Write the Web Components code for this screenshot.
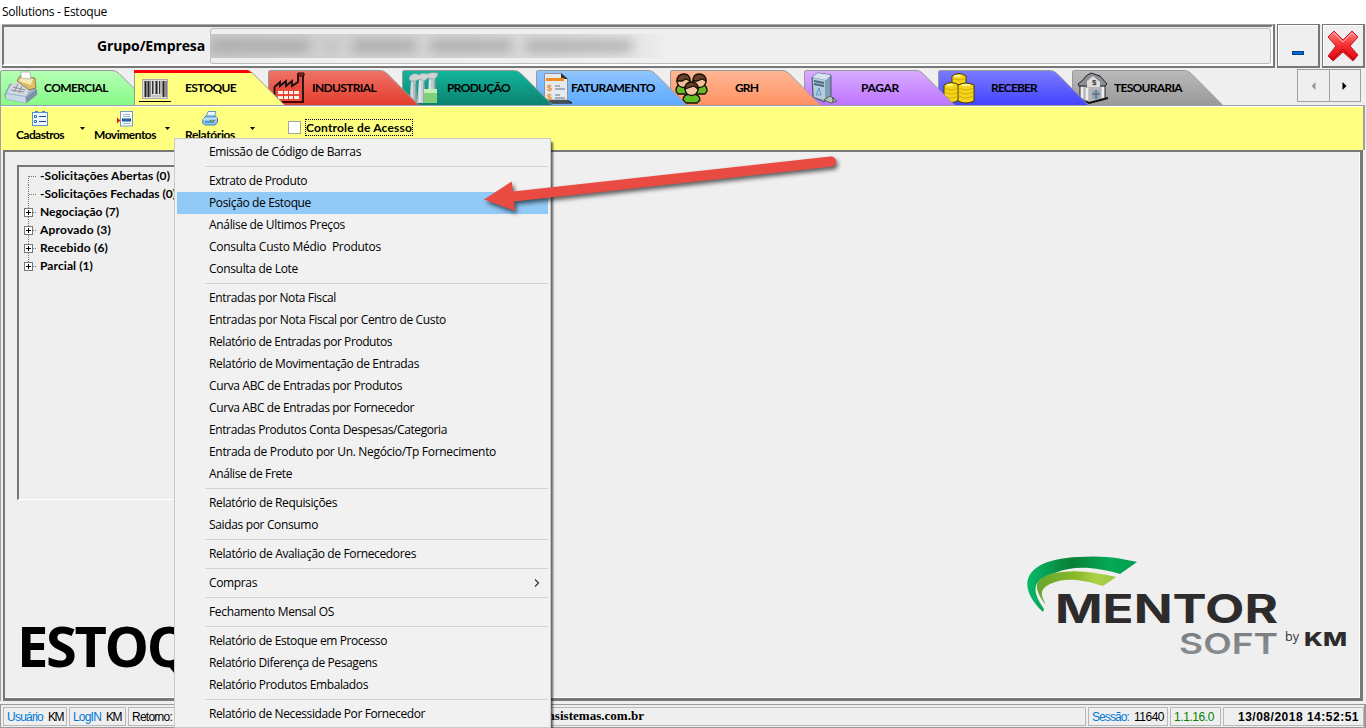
<!DOCTYPE html>
<html lang="pt-BR">
<head>
<meta charset="utf-8">
<title>Sollutions - Estoque</title>
<style>
html,body{margin:0;height:100%;overflow:hidden;background:#efefef}
</style>
</head>
<body>
<erp-window></erp-window>
<script>
const define=(name,markup,init)=>{
  const t=document.createElement('template');t.innerHTML=markup;
  customElements.define(name,class extends HTMLElement{
    connectedCallback(){
      if(this.shadowRoot)return;
      this.attachShadow({mode:'open'}).appendChild(document.importNode(t.content,true));
      if(init)init(this,this.shadowRoot);
    }
  });
};

/* A single line of text whose tracking is tuned to a given width. */
define('fit-text',`<style>:host{display:block;white-space:pre;flex:none}span{display:inline-block}</style><span><slot></slot></span>`,(h,r)=>{
  const w=+h.getAttribute('w'),s=r.querySelector('span');
  if(!w)return;
  const n=[...h.textContent].length;
  s.style.letterSpacing=((w-s.getBoundingClientRect().width)/n)+'px';
  h.style.width=w+'px';
});

const icons={
register:`<path d="M0 22 5 12 30 16 32 22 21 31 1 27z" fill="#9fb4ca" stroke="#6f8296" stroke-width=".6"/><path d="M1 22 20 25 21 31 1 27z" fill="#c9d8e6"/><path d="M21 25 32 17 32 23 21 31z" fill="#7d90a8"/><path d="M6 13 13 9 27 14 21 24 2 21z" fill="#d3d9de"/><path d="M12 9 15 4 30 6 31 16 24 18z" fill="#e0bd68" stroke="#75613a" stroke-width=".7"/><path d="M14 9 17 5 28 7 26 13z" fill="#f7e8b8"/><path d="M16 6 16 0 25 0 26 7z" fill="#fff" stroke="#999" stroke-width=".6"/><path d="M8 15 20 18M6 18 19 20M13 12 9 20M17 14 14 21" stroke="#7c8791" stroke-width=".9"/>`,
barcode:`<rect x="3.500" y="7.500" width="25" height="19" fill="#dcdcdc" stroke="#aaa"/><path d="M6.500 9V25M9.500 9V25M17.500 9V22M24.500 9V25" stroke="#222" stroke-width="2"/><path d="M13.500 9V22M20.500 9V22M27 9V25" stroke="#333"/><path d="M14.500 9V22M22 9V22M11.500 9V25" stroke="#888"/><path d="M13 24h10" stroke="#888" stroke-dasharray="1.500 1"/><path d="M0 29.500H32" stroke="#000"/>`,
factory:`<path d="M1.500 30V15L7 10V14L13 9V14L19 9V14L25 10V2.500H30V30z" fill="#e94a3c" stroke="#111" stroke-width="1.800"/><path d="M25 1H31V4H25z" fill="#b41e19" stroke="#111"/><path d="M5 19H26V22H5zM5 24H26V27H5z" fill="#fff0ea"/><path d="M10.500 18V28M15.500 18V28M20.500 18V28" stroke="#e33a2c"/><path d="M1 30H31" stroke="#400" stroke-width="2"/>`,
plant:`<path d="M4 9H9L10 31H2z" fill="#aebdc4"/><path d="M12 7H17L19 31H10z" fill="#c6d1d6"/><path d="M22 6H28L29 31H20z" fill="#b9c9cb"/><path d="M5 10V30M13 9V30M23 8V20" stroke="#f4f7f8"/><path d="M17 10V31M9 11V31M28 8V18" stroke="#71878d"/><path d="M4 9Q1 8 3 4 7 0 12 3 15 0 20 2 24 0 31 1 31 5 27 7L21 6 17 9 13 7 8 9z" fill="#d0d3d4" stroke="#9aa4a4" stroke-width=".7"/><rect x="17" y="17" width="13" height="14" fill="#82cf7b"/><path d="M17 17H30V21H17z" fill="#c5eeb7"/>`,
invoice:`<path d="M3.500 1.500H20L26.500 7V28H3.500z" fill="#e5e9ed" stroke="#8b9197"/><path d="M20 1 27 7H20z" fill="#333"/><path d="M5 6H23V9H5z" fill="#ef8d24"/><path d="M14 14H19M14 17H24M14 23H19M14 26H24" stroke="#8c9cac" stroke-width="1.500"/><text x="6" y="19" font-size="9" font-family="Liberation Sans" font-weight="bold" fill="#ee8b18">$</text><text x="6" y="28" font-size="9" font-family="Liberation Sans" font-weight="bold" fill="#ee8b18">$</text><path d="M8 29H28L31 31H9z" fill="#888" stroke="#111"/>`,
people:`<g stroke="#171006" stroke-width="1.300"><path d="M1 19Q1 12 8 12T16 19L14 22H3zM17 19Q18 12 25 12T32 19L30 22H19z" fill="#65b927"/><circle cx="8.500" cy="9" r="6.500" fill="#f3c09a"/><circle cx="24.500" cy="9" r="6.500" fill="#f3c09a"/><path d="M2 9Q2 2 9 2 15 2 15 9L11 7 7 9zM18 9Q18 2 24 2 31 2 31 9L27 7 22 9z" fill="#68412b"/><path d="M8 28Q8 22 16.500 22 25 22 25 28L22 31H11z" fill="#5dbd23"/><circle cx="16.500" cy="17" r="6.500" fill="#f5c6a2"/><path d="M10 17Q10 10 16.500 10 23 10 23 17L19 14 13 16z" fill="#67402b"/></g>`,
bin:`<path d="M3 5 9 1 22 3 22 24 15 30 4 25z" fill="#7f9fb8" stroke="#29323a" stroke-width=".7"/><path d="M3 5 9 1 22 3 17 8z" fill="#d4e3ed"/><path d="M4 6 16 8 16 28 5 25z" fill="#b9ccda"/><path d="M5 9 15 11M5 12 15 14" stroke="#496984" stroke-width="2"/><path d="M7 23 10 16 12 23z" fill="none" stroke="#4f9bd0"/><path d="M15 28 21 24 28 29 22 31z" fill="#b4c7b7" stroke="#51634f"/><path d="M24 25V30" stroke="#354937"/>`,
coins:`<g fill="#f6d41a" stroke="#463a00"><path d="M9 4V17H23V4Q16-1 9 4"/><path d="M1 13V28Q8 33 16 28V13Q8 8 1 13"/><path d="M15 13V29Q23 33 31 29V13Q23 9 15 13"/></g><g fill="none" stroke="#d0aa08"><path d="M9 6Q16 10 23 6M2 16Q8 20 15 16M2 20Q8 24 15 20M2 24Q8 28 15 24M16 16Q23 20 30 16M16 20Q23 24 30 20M16 24Q23 28 30 24"/></g><path d="M11 4H18M4 13H10M19 13H27" stroke="#fff59b" stroke-width="2"/>`,
bank:`<path d="M3 13H28V27L13 31 3 27z" fill="#b7b8bb" stroke="#222"/><path d="M1 12 6 8 9 4 14 1 23 4 30 12 28 14H2z" fill="#8b8f94" stroke="#222"/><path d="M10 9 16 4 23 10V15H10z" fill="#ddd"/><text x="15" y="13" font-size="8" font-family="Liberation Sans" font-weight="bold" fill="#333">$</text><path d="M5 15V26M10 16V28M26 15V26" stroke="#eee" stroke-width="2.500"/><path d="M15 18H23V27H15z" fill="#8da9bb"/><path d="M19 18V27M15 22H23" stroke="#556"/><path d="M1 27 12 31 31 26" fill="none" stroke="#111" stroke-width="2"/>`,
form:`<rect x=".5" y="1.500" width="15" height="13" fill="#f4faff" stroke="#5a93c8"/><path d="M3 .500H6M10 .500H13" stroke="#4779aa"/><path d="M2.500 4.500H4.500V6.500H2.500zM2.500 9.500H4.500V11.500H2.500z" fill="#fff" stroke="#2773bd"/><path d="M7 5.500H14M7 10.500H14" stroke="#174d8d"/>`,
move:`<rect x="3.500" y=".500" width="12" height="14.500" fill="#f7fbff" stroke="#719dca"/><path d="M6 3.500H13M6 5.500H13M6 12.500H13" stroke="#9eb8d2"/><rect x="5.500" y="8" width="8" height="2" fill="#2a82cf" stroke="#164b86"/><path d="M0 6.500 3.500 9.500 0 12.500z" fill="#e51c1c"/>`,
printer:`<path d="M4 6 6 .500H14L12 7z" fill="#edf7ff" stroke="#5d9bd0"/><path d="M1 8 4 5H13L15.500 7V11L13 14H3L.500 12z" fill="#8fc6ef" stroke="#3d86c4"/><path d="M1 8H12L15 7" fill="none" stroke="#e9f7ff"/><path d="M3 11H12" stroke="#236199"/><path d="M8 9.500H10" stroke="#19b719" stroke-width="1.500"/><path d="M11 9.500H12.500" stroke="#e22" stroke-width="1.500"/>`
};

define('erp-icon',`<style>:host{display:block;flex:none}svg{display:block;overflow:visible}</style><svg></svg>`,(h,r)=>{
  const n=+h.getAttribute('size')||32,s=r.querySelector('svg');
  s.setAttribute('width',n);s.setAttribute('height',n);s.setAttribute('viewBox',`0 0 ${n} ${n}`);
  s.innerHTML=icons[h.getAttribute('name')];
});

define('erp-tab',`<style>
:host{display:block;width:134px;height:36px;flex:none}
.shape{display:block;width:153px;height:36px}
.body{display:grid;width:153px;height:36px}
.body>*{grid-area:1/1}
.icon{padding:3px 0 0 5px}
.label{display:flex;align-items:flex-start;padding-top:11px}
</style><div class="body"><svg class="shape" width="153" height="36"></svg><div class="icon"></div><div class="label"></div></div>`,(h,r)=>{
  const a=n=>h.getAttribute(n),sel=h.hasAttribute('selected');
  r.querySelector('svg').innerHTML=`<defs><linearGradient id="g" x2="0" y2="1"><stop stop-color="${a('top')}"/><stop offset="1" stop-color="${a('bottom')}"/></linearGradient></defs>
  <path d="M.500 36V3Q.500 1.500 2.500 1.500H112Q116 1.500 119 4.500L150.500 36z" fill="url(#g)"/><path d="M.500 36V3Q.500 1.500 2.500 1.500H112Q116 1.500 119 4.500L150.500 36" fill="none" stroke="#999"/>${sel?'<path d="M0 1H114L118 4H0z" fill="#f00"/>':''}`;
  r.querySelector('.icon').innerHTML=`<erp-icon name="${a('icon')}"></erp-icon>`;
  const f=r.querySelector('.label');f.style.paddingLeft=(+a('indent')+1)+'px';
  f.innerHTML=`<fit-text w="${a('w')}">${a('label')}</fit-text>`;
});

define('erp-tabs',`<style>
:host{display:flex;height:36px;padding:0 5px 0 0;justify-content:space-between;font:bold 12px/16px Lato,sans-serif;color:#000}
.tabs{display:flex}
erp-tab{position:relative}
.scroll{display:flex;height:31px;width:62px;border:1px solid #a0a0a0}
.scroll div{flex:1;display:flex;align-items:center;justify-content:center}
.scroll div+div{border-left:1px solid #a0a0a0}
</style><div class="tabs">
<erp-tab style="z-index:9" label="COMERCIAL" indent="43" w="64" icon="register" top="#b5ffb5" bottom="#87fa87"></erp-tab>
<erp-tab selected style="z-index:12" label="ESTOQUE" indent="50" w="51" icon="barcode" top="#ffff82" bottom="#ffff80"></erp-tab>
<erp-tab style="z-index:7" label="INDUSTRIAL" indent="43" w="64" icon="factory" top="#ee7468" bottom="#e53c2d"></erp-tab>
<erp-tab style="z-index:6" label="PRODUÇÃO" indent="44" w="63" icon="plant" top="#12b69d" bottom="#0b8270"></erp-tab>
<erp-tab style="z-index:5" label="FATURAMENTO" indent="34" w="84" icon="invoice" top="#91c5ff" bottom="#5eaaff"></erp-tab>
<erp-tab style="z-index:4" label="GRH" indent="64" w="23" icon="people" top="#ffb795" bottom="#ff9264"></erp-tab>
<erp-tab style="z-index:3" label="PAGAR" indent="56" w="38" icon="bin" top="#d9adff" bottom="#bd73ff"></erp-tab>
<erp-tab style="z-index:2" label="RECEBER" indent="52" w="46" icon="coins" top="#7b7bff" bottom="#4444ff"></erp-tab>
<erp-tab style="z-index:1" label="TESOURARIA" indent="41" w="68" icon="bank" top="#bababa" bottom="#999"></erp-tab>
</div><div class="scroll"><div><svg width="5" height="8"><path d="M4.500 0V8L.500 4z" fill="#999"/></svg></div><div><svg width="5" height="8"><path d="M.500 0V8L4.500 4z" fill="#000"/></svg></div></div>`);

define('erp-header',`<style>
:host{display:flex;height:45px;font:bold 14px/18px "Open Sans",sans-serif;gap:2px;padding-left:2px;box-sizing:border-box}
.panel{box-sizing:border-box;width:1273px;height:44px;border-top:1px solid #aaa;border-right:2px solid #777;border-bottom:2px solid #777;display:flex}
.in{box-sizing:border-box;flex:1;border-top:2px solid #777;border-left:2px solid #777;border-right:2px solid #fff;border-bottom:2px solid #fff;display:flex;align-items:center}
.label{width:206px;box-sizing:border-box;padding-left:93px}
.field{height:36px;width:1061px;box-sizing:border-box;border:1px solid #bbb;border-radius:3px;display:flex;align-items:center}
.redact{width:457px;height:24px;margin-left:-1px;overflow:hidden;display:flex;align-items:center;gap:14px;background:linear-gradient(90deg,#ccc,#dadada 70%,#e7e7e7 95%,#efefef)}
.redact i{height:12px;background:#999;filter:blur(6px);opacity:.7}
button{box-sizing:border-box;width:43px;height:44px;padding:0;border:solid #777;border-width:1px 2px 2px 1px;background:#efefef;display:flex;align-items:center;justify-content:center;box-shadow:inset 1px 1px #fff;flex:none}
</style><div class="panel"><div class="in"><div class="label"><fit-text w="108">Grupo/Empresa</fit-text></div><div class="field"><div class="redact"><i style="width:100px"></i><i style="width:14px;opacity:.3"></i><i style="width:64px"></i><i style="width:82px"></i><i style="width:106px"></i></div></div></div></div>
<button aria-label="Minimizar"><svg width="12" height="30"><rect x=".5" y="20.500" width="11" height="3" fill="#0868cc" stroke="#003e96"/></svg></button>
<button aria-label="Fechar"><svg width="32" height="32" viewBox="0 0 32 32"><defs><linearGradient id="r" x2="0" y2="1"><stop stop-color="#ff8585"/><stop offset=".5" stop-color="#f42b2b"/><stop offset="1" stop-color="#df0a16"/></linearGradient></defs><path d="M7 1 16 10 25 1 31 7 23 16 31 25 26 31 16 22 6 31 1 26 9 16 1 7z" fill="url(#r)" stroke="#c71926" stroke-linejoin="round"/><path d="M7 3 16 12 25 3 28 6" fill="none" stroke="#ffb5b5"/><path d="M3 26 6 29 16 19 26 29 29 26" fill="none" stroke="#b60010"/></svg></button>`);

define('erp-tool',`<style>
:host{display:flex;width:85px;height:43px;flex:none}
.main{width:78px;display:flex;flex-direction:column;align-items:center;padding-top:3px}
fit-text{margin-top:1px}
svg{margin:19px 0 0 1px;flex:none}
</style><div class="main"></div><svg width="5" height="3"><path d="M0 0H5L2.500 3z"/></svg>`,(h,r)=>{
  r.querySelector('.main').innerHTML=`<erp-icon size="16" name="${h.getAttribute('icon')}"></erp-icon><fit-text w="${h.getAttribute('w')}">${h.textContent}</fit-text>`;
});

define('erp-toolbar',`<style>
:host{display:flex;background:#ffff80;border:solid #a0a0a0;border-width:1px 2px 0 1px;box-shadow:inset 0 1px #fff;margin-right:1px;font:bold 12px/14px Lato,sans-serif;box-sizing:border-box;height:45px;padding-top:2px}
.check{display:flex;align-items:center;height:17px;margin:11px 0 0 32px;gap:4px}
.box{width:11px;height:11px;border:1px solid #a6a6a6;background:#fff}
.lab{border:1px dotted #000;height:14px;width:106px;padding-top:1px}
</style><erp-tool icon="form" w="48">Cadastros</erp-tool><erp-tool icon="move" w="62">Movimentos</erp-tool><erp-tool icon="printer" w="50">Relatórios</erp-tool><div class="check"><div class="box"></div><div class="lab"><fit-text w="106">Controle de Acesso</fit-text></div></div>`);

define('tree-item',`<style>
:host{display:flex;height:18px;align-items:center}
svg{width:21px;height:18px;flex:none}
</style><svg></svg><slot></slot>`,(h,r)=>{
  const e=h.hasAttribute('expandable'),f=h.hasAttribute('first'),l=h.hasAttribute('last');
  r.querySelector('svg').innerHTML=`<path d="M9.500 ${f?9:0}V${l?9:18}M10 9.500H18" stroke="#777" stroke-dasharray="1 1"/>`+(e?'<rect x="5.500" y="5.500" width="8" height="8" fill="#fff" stroke="#777"/><path d="M7 9.500H12M9.500 7V12" stroke="#000"/>':'');
});

define('erp-tree',`<style>
:host{display:block;box-sizing:border-box;width:340px;height:335px;border:solid #777;border-width:2px 0 0 2px;border-bottom:1px solid #fff;font:bold 12px/18px Lato,sans-serif}
</style><tree-item first><fit-text w="130">-Solicitações Abertas (0)</fit-text></tree-item><tree-item><fit-text w="136">-Solicitações Fechadas (0)</fit-text></tree-item><tree-item expandable><fit-text w="79">Negociação (7)</fit-text></tree-item><tree-item expandable><fit-text w="71">Aprovado (3)</fit-text></tree-item><tree-item expandable><fit-text w="68">Recebido (6)</fit-text></tree-item><tree-item expandable last><fit-text w="53">Parcial (1)</fit-text></tree-item>`);

define('mentor-logo',`<style>:host{display:block;width:330px;height:110px}svg{display:block}</style>
<svg width="330" height="110" viewBox="0 0 330 110"><defs><linearGradient id="a" x2="1"><stop stop-color="#08b968"/><stop offset=".4" stop-color="#087f36"/><stop offset=".75" stop-color="#05a957"/><stop offset="1" stop-color="#009d50"/></linearGradient><linearGradient id="b" x2="1"><stop stop-color="#64a62f"/><stop offset=".5" stop-color="#8ab829"/><stop offset=".75" stop-color="#abd247"/><stop offset="1" stop-color="#9bc83a"/></linearGradient><linearGradient id="c" x2="0" y2="1"><stop stop-color="#76797c"/><stop offset="1" stop-color="#909396"/></linearGradient></defs>
<path d="M24 62C-4 36 4 9 60 7 86 5 105 9 118 12L101 24C76 17 56 15 36 23 10 30 14 43 25 59z" fill="url(#a)"/><path d="M26 54C13 36 14 26 43 22 62 20 79 23 97 27L84 36C63 29 45 27 31 34 19 40 23 46 26 53z" fill="url(#b)"/>
<g font-family="Inter,sans-serif" font-weight="700"><text x="36" y="73" font-size="39" textLength="223" lengthAdjust="spacingAndGlyphs" fill="#2e2b2c">MENTOR</text><text x="160" y="104" font-size="29" font-weight="600" textLength="99" lengthAdjust="spacingAndGlyphs" fill="url(#c)">SOFT</text><text x="285" y="96" font-size="19" font-weight="800" textLength="43" lengthAdjust="spacingAndGlyphs" fill="#2e2b2c">KM</text></g><text x="266" y="91" font-family="Open Sans,sans-serif" font-size="12" textLength="14" lengthAdjust="spacingAndGlyphs" fill="#333">by</text></svg>`);

define('erp-workspace',`<style>
:host{display:block;height:551px;padding:0 3px 0 2px;box-sizing:border-box;background:#efefef;border-left:1px solid #a0a0a0}
.pane{box-sizing:border-box;height:551px;border:solid #777;border-width:2px 3px 3px 2px;padding:13px 12px 0 12px;display:flex;flex-direction:column;justify-content:space-between;box-shadow:inset -1px -1px #fff}
.bottom{display:flex;justify-content:space-between;align-items:flex-end;height:170px}
h1{margin:0;font:bold 56px/64px "Open Sans",sans-serif;padding:0 0 21px 0}
mentor-logo{margin-bottom:38px;margin-right:-1px}
</style><div class="pane"><erp-tree></erp-tree><div class="bottom"><h1><fit-text w="241">ESTOQUE</fit-text></h1><mentor-logo></mentor-logo></div></div>`);

define('status-panel',`<style>
:host{display:flex;box-sizing:border-box;height:19px;border:1px solid #b8b8b8;align-items:center;gap:5px;padding:0 3px;flex:none}
</style><slot></slot>`);

define('erp-status',`<style>
:host{display:flex;box-sizing:border-box;height:24px;border:1px solid #999;border-width:1px 2px 1px 1px;padding:2px 0 0 2px;gap:2px;font:12px/14px "Liberation Sans",sans-serif;color:#000}
b{font:inherit;color:#0078d7}.g{color:#008000}
.site{font:bold 13px/14px "Liberation Serif",serif;margin:-2px 0 0 367px}
.time{font-weight:bold;justify-content:flex-end;padding-right:4px}
</style>
<status-panel style="width:64px"><b><fit-text w="36">Usuário</fit-text></b><fit-text w="15">KM</fit-text></status-panel>
<status-panel style="width:57px"><b><fit-text w="28">LogIN</fit-text></b><fit-text w="15">KM</fit-text></status-panel>
<status-panel style="width:958px"><fit-text w="40">Retorno:</fit-text><div class="site"><fit-text w="100">msistemas.com.br</fit-text></div></status-panel>
<status-panel style="width:80px"><b><fit-text w="37">Sessão:</fit-text></b><fit-text w="30">11640</fit-text></status-panel>
<status-panel style="width:51px"><fit-text class="g" w="40">1.1.16.0</fit-text></status-panel>
<status-panel class="time" style="width:141px"><fit-text w="121">13/08/2018 14:52:51</fit-text></status-panel>`);

define('menu-item',`<style>
:host{display:flex;height:22px;align-items:center;justify-content:space-between;margin:0 2px;padding:0 8px 0 32px}
:host([active]){background:#91c9f7}
svg{display:none}:host([sub]) svg{display:block}
</style><slot></slot><svg width="6" height="8"><path d="M1 .500 4.500 4 1 7.500" fill="none" stroke="#333" stroke-width="1.200"/></svg>`);
define('menu-line',`<style>:host{display:block;height:1px;margin:3px 2px 3px 30px;background:#d3d3d3}</style>`);

define('erp-menu',`<style>
:host{display:block;box-sizing:border-box;width:377px;height:590px;background:#f1f1f1;border:1px solid #c8c8c8;padding-top:2px;font:12px/16px "Open Sans","Noto Sans",sans-serif;color:#000;box-shadow:3px 3px 2px -1px #0009}
</style>`,(h,r)=>{
  const groups=[
  [['Emissão de Código de Barras',152]],
  [['Extrato de Produto',98],['Posição de Estoque',102,'active'],['Análise de Ultimos Preços',136],['Consulta Custo Médio  Produtos',172],['Consulta de Lote',89]],
  [['Entradas por Nota Fiscal',127],['Entradas por Nota Fiscal por Centro de Custo',237],['Relatório de Entradas por Produtos',183],['Relatório de Movimentação de Entradas',210],['Curva ABC de Entradas por Produtos',193],['Curva ABC de Entradas por Fornecedor',205],['Entradas Produtos Conta Despesas/Categoria',238],['Entrada de Produto por Un. Negócio/Tp Fornecimento',287],['Análise de Frete',83]],
  [['Relatório de Requisições',128],['Saidas por Consumo',109]],
  [['Relatório de Avaliação de Fornecedores',207]],
  [['Compras',48,'sub']],
  [['Fechamento Mensal OS',125]],
  [['Relatório de Estoque em Processo',178],['Relatório Diferença de Pesagens',168],['Relatório Produtos Embalados',159]],
  [['Relatório de Necessidade Por Fornecedor',216]]];
  r.append(document.createRange().createContextualFragment(groups.map(g=>g.map(([t,w,a=''])=>`<menu-item ${a}><fit-text w="${w}">${t}</fit-text></menu-item>`).join('')).join('<menu-line></menu-line>')));
});

define('callout-arrow',`<style>:host{display:block;pointer-events:none}svg{display:block;filter:drop-shadow(2px 3px 2px #0009)}</style>
<svg width="360" height="70"><path d="M4 49.500 31.700 31.500 33 41.500 350 6.500A5 5 0 0 1 352 16.500L34 51.500 35 61z" fill="#e94b43"/></svg>`);

define('erp-window',`<style>
:host{display:block;width:1366px;height:728px;background:#efefef;position:relative;overflow:hidden}
.title{height:24px;background:#fff;font:12px/24px "Open Sans",sans-serif;padding-left:2px;color:#000}
erp-status{margin-top:3px}
erp-menu{position:absolute;left:174px;top:138px}
callout-arrow{position:absolute;left:480px;top:150px}
</style><div class="title"><fit-text w="105">Sollutions - Estoque</fit-text></div>
<erp-header></erp-header><erp-tabs></erp-tabs><erp-toolbar></erp-toolbar><erp-workspace></erp-workspace><erp-status></erp-status><erp-menu></erp-menu><callout-arrow></callout-arrow>`);
</script>
</body>
</html>
